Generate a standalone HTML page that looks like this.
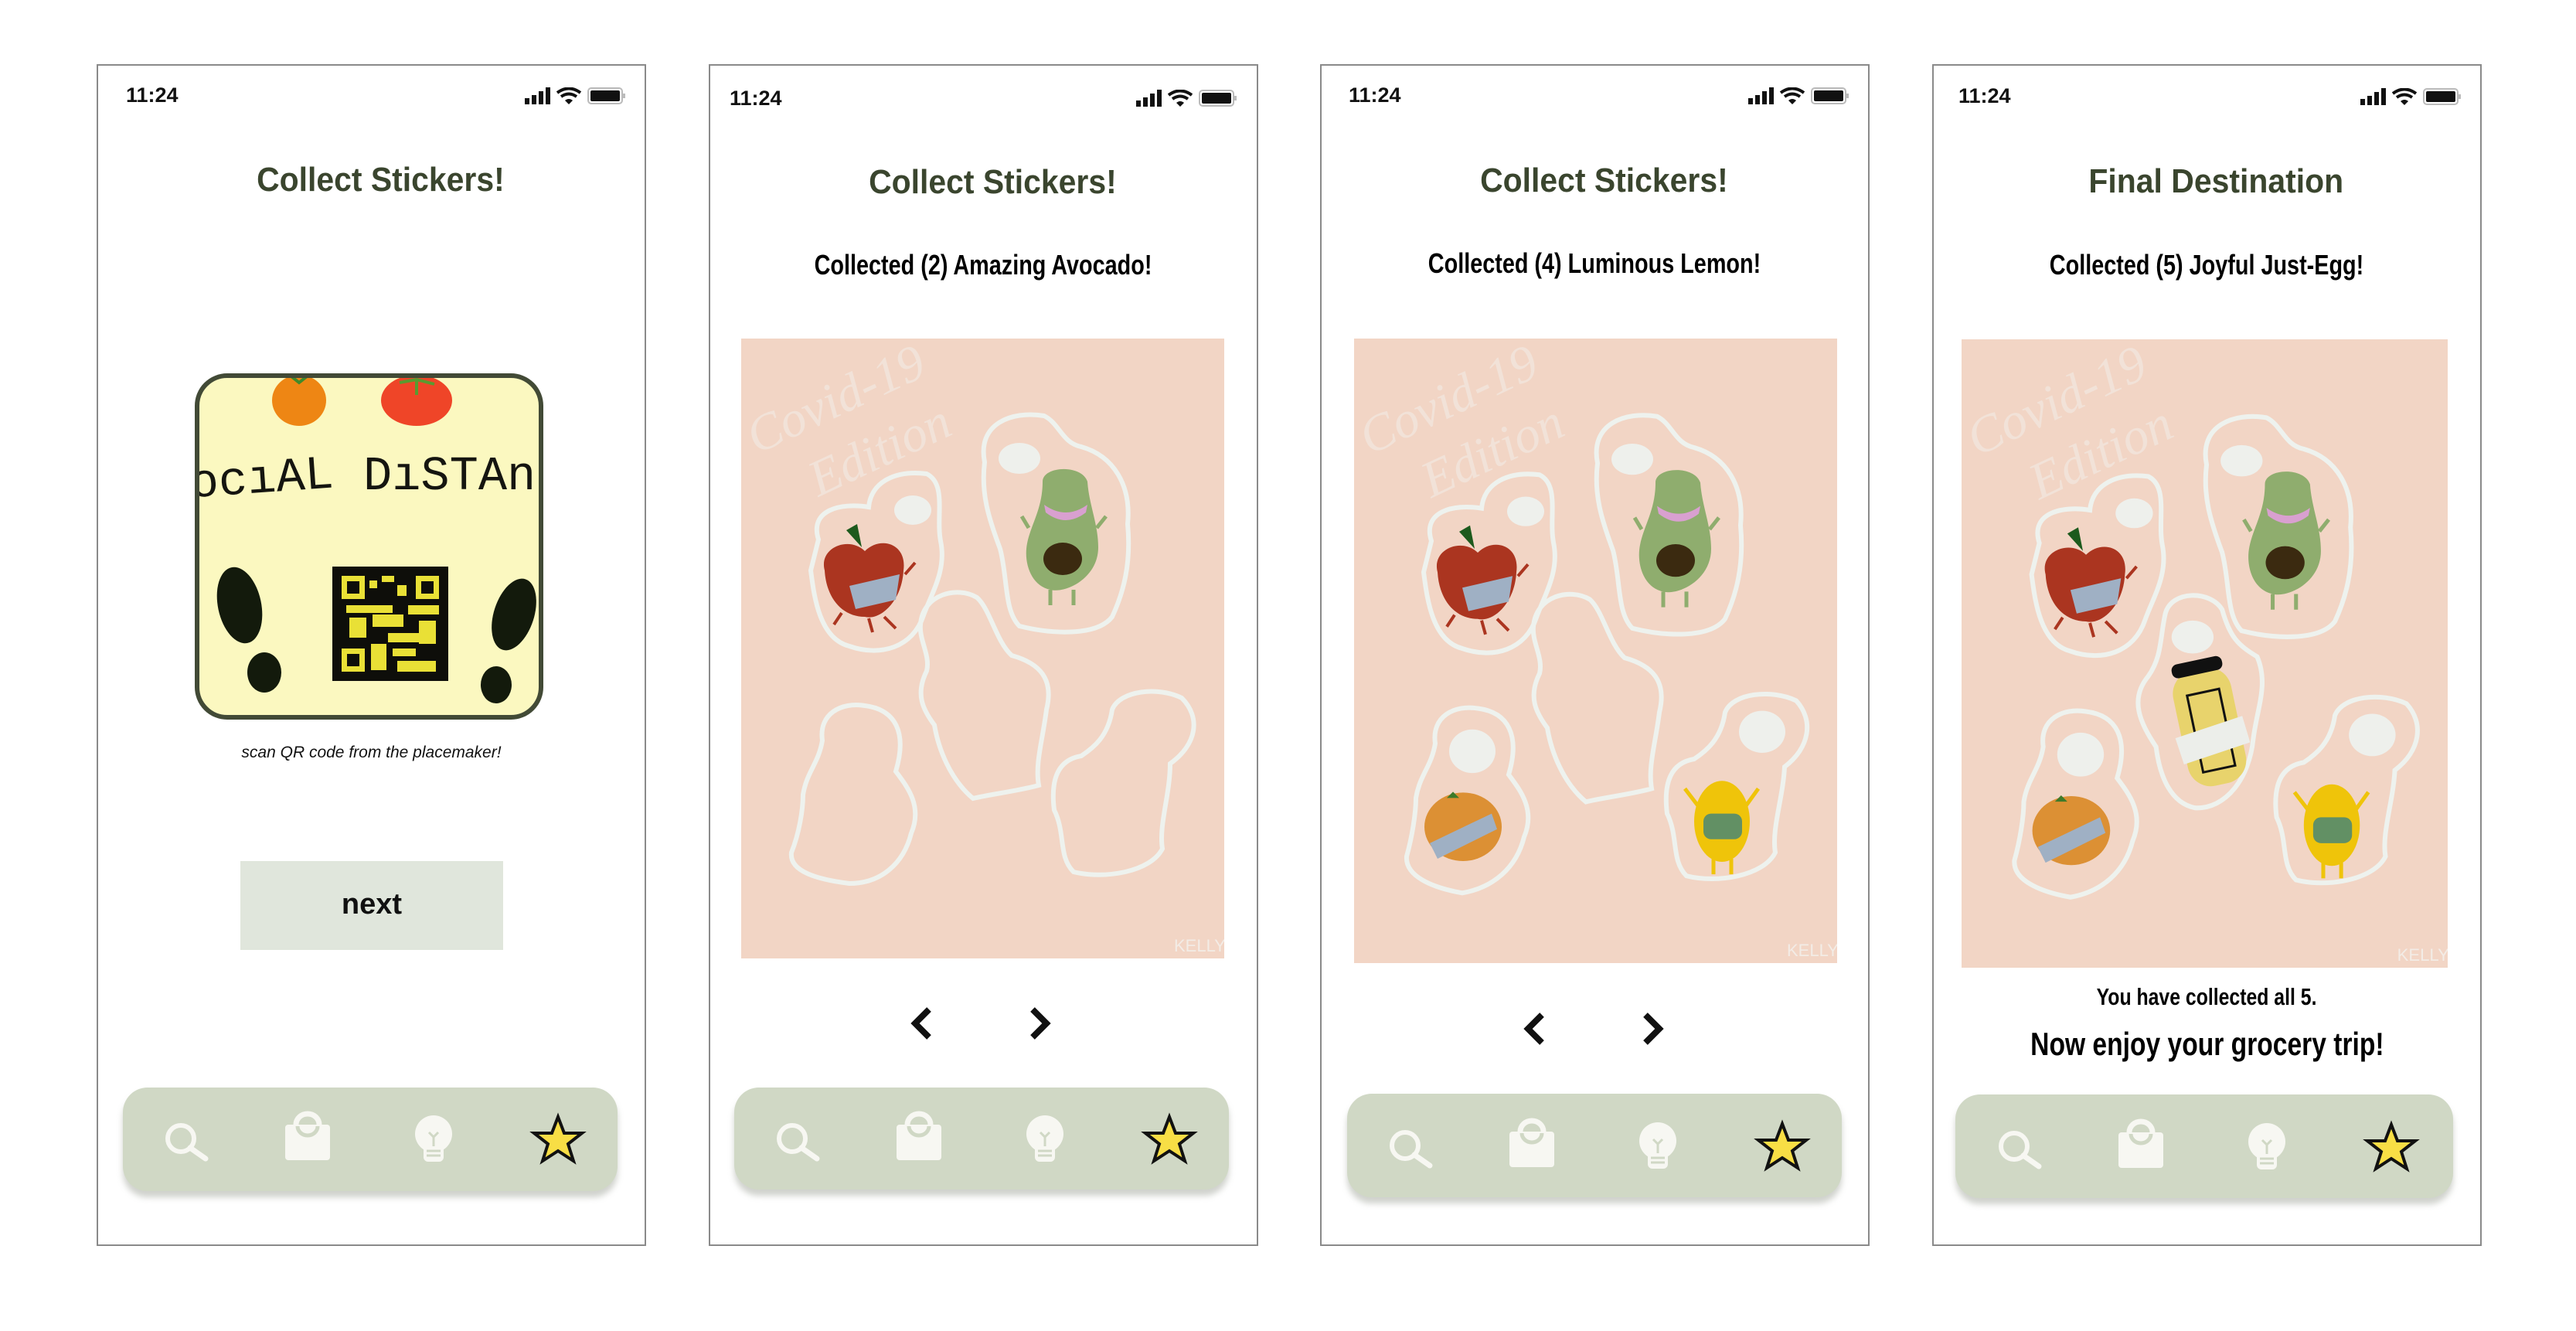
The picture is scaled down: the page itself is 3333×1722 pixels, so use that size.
<!DOCTYPE html>
<html><head><meta charset="utf-8">
<style>
*{margin:0;padding:0;box-sizing:border-box}
html,body{width:3333px;height:1722px;background:#fff;overflow:hidden;position:relative;font-family:"Liberation Sans",sans-serif}
.ph{position:absolute;top:83px;width:711px;height:1529px;border:2px solid #8a8a8a;background:#fff}
.abs{position:absolute}
.time{position:absolute;font-weight:bold;font-size:27px;color:#111}
.ctr{position:absolute;text-align:center;white-space:nowrap}
.ctr span{display:inline-block}
.title{font-weight:bold;font-size:44px;color:#3a452e}
.title span{transform:scaleX(.93)}
.sub{font-weight:bold;font-size:36px;color:#000}
.sub span{transform:scaleX(.8)}
.nav{position:absolute;background:#d0d8c5;border-radius:32px;box-shadow:0 8px 8px rgba(150,155,145,.45)}
.pink{position:absolute;background:#f2d5c5}
</style></head><body>

<svg width="0" height="0" style="position:absolute">
<defs>
<g id="status">
 <rect x="0" y="14" width="6" height="8" fill="#111"/><rect x="9" y="10" width="6" height="12" fill="#111"/><rect x="18" y="5" width="6" height="17" fill="#111"/><rect x="27" y="0" width="6" height="22" fill="#111"/>
 <path d="M42 7 Q57 -4 72 7" stroke="#111" stroke-width="4" fill="none"/><path d="M47 12 Q57 5 67 12" stroke="#111" stroke-width="4" fill="none"/><path d="M52 17 L57 22 L62 17 Q57 13 52 17Z" fill="#111"/>
 <rect x="82" y="1" width="44" height="20" rx="4" fill="none" stroke="#bbb" stroke-width="2"/><rect x="85" y="4" width="38" height="14" rx="2" fill="#111"/><rect x="127" y="8" width="3" height="6" fill="#bbb"/>
</g>
<g id="icons">
 <circle cx="0" cy="0" r="17" fill="none" stroke="#f7f7f2" stroke-width="6"/><path d="M12 12 L32 26" stroke="#f7f7f2" stroke-width="7" stroke-linecap="round"/>
 <g transform="translate(164,0)"><rect x="-29" y="-18" width="58" height="46" rx="4" fill="#f7f7f2"/><path d="M-15 -18 a15 14 0 0 1 30 0 M-13 -14 a13 12 0 0 0 26 0" stroke="#f7f7f2" stroke-width="7" fill="none"/><path d="M-13 -16 a13 12 0 0 0 26 0" stroke="#d0d8c5" stroke-width="5" fill="none"/></g>
 <g transform="translate(327,0)"><circle cx="0" cy="-6" r="24" fill="#f7f7f2"/><rect x="-13" y="8" width="26" height="22" rx="6" fill="#f7f7f2"/><path d="M-6 -8 L0 -2 L6 -8 M0 -2 L0 10 M-9 16 H9 M-9 22 H9" stroke="#d0d8c5" stroke-width="3" fill="none"/></g>
 <polygon transform="translate(488,2)" points="0,-30 8,-9 31,-9 13,5 20,27 0,14 -20,27 -13,5 -31,-9 -8,-9" fill="#f8de45" stroke="#111" stroke-width="4" stroke-linejoin="miter"/>
</g>
<g id="cov">
 <text x="20" y="150" transform="rotate(-25 20 150)" font-family="Liberation Serif,serif" font-style="italic" font-size="66" fill="#f3ece6" opacity=".6">Covid-19</text>
 <text x="100" y="205" transform="rotate(-25 100 205)" font-family="Liberation Serif,serif" font-style="italic" font-size="66" fill="#f3ece6" opacity=".6">Edition</text>
 <text x="560" y="793" font-family="Liberation Sans,sans-serif" font-size="22" fill="#f3ece6">KELLY</text>
</g>
<g id="apple">
 <path d="M100,260 C88,222 128,212 165,218 C168,185 200,170 240,175 C266,188 252,230 258,262 C266,300 246,330 236,358 C222,400 180,412 140,398 C100,388 94,330 90,300 Z" fill="none" stroke="#eef2ee" stroke-width="6"/>
 <ellipse cx="222" cy="222" rx="24" ry="19" fill="#eef0ec"/>
 <path d="M108,300 C100,270 140,255 160,275 C180,255 215,265 210,300 C208,340 180,365 160,360 C130,360 110,335 108,300Z" fill="#ab3520"/>
 <path d="M136,248 L150,240 L156,270Z" fill="#1d5a1d"/>
 <path d="M140,320 L205,305 L200,338 L148,350Z" fill="#9fb0c4"/>
 <path d="M212,305 L225,290 M130,355 L120,370 M165,362 L170,380 M185,360 L200,375" stroke="#ab3520" stroke-width="4"/>
</g>
<g id="avo">
 <path d="M315,160 C305,110 350,93 392,100 C412,110 415,135 440,140 C482,152 505,190 500,240 C505,292 494,330 480,360 C460,386 400,382 360,372 C340,352 345,310 335,272 C320,232 310,200 315,160 Z" fill="none" stroke="#eef2ee" stroke-width="6"/>
 <ellipse cx="360" cy="155" rx="27" ry="20" fill="#eef0ec"/>
 <path d="M390,185 C390,165 440,162 448,185 C450,215 462,240 462,270 C462,310 420,330 400,325 C375,320 365,290 370,265 C375,240 390,220 390,185Z" fill="#8fad6e"/>
 <path d="M392,215 Q420,235 448,215 L446,225 Q420,245 394,225Z" fill="#d9a0d0"/>
 <ellipse cx="416" cy="285" rx="25" ry="21" fill="#3b2a10"/>
 <path d="M372,245 L363,230 M460,245 L472,230 M400,325 V345 M430,325 V345" stroke="#8fad6e" stroke-width="5"/>
</g>
<g id="emptyC"><path d="M232,370 C235,330 280,320 305,335 C322,350 330,392 350,410 C386,420 405,440 395,480 C390,520 380,550 385,578 C360,585 320,590 300,595 C270,570 255,530 250,500 C235,480 225,460 240,430 C245,410 230,390 232,370 Z" fill="none" stroke="#eef2ee" stroke-width="6"/></g>
<g id="emptyL"><path d="M105,520 C100,485 130,470 160,475 C200,480 215,510 200,560 C215,580 235,605 220,640 C210,680 180,705 140,705 C100,700 62,690 65,665 C75,640 80,610 80,590 C85,560 100,550 105,520 Z" fill="none" stroke="#eef2ee" stroke-width="6"/></g>
<g id="emptyR"><path d="M480,480 C490,455 540,450 570,465 C595,490 590,525 555,550 C555,590 540,630 545,660 C530,690 470,700 430,690 C410,670 420,640 405,610 C400,570 410,545 440,540 C455,530 475,515 480,480 Z" fill="none" stroke="#eef2ee" stroke-width="6"/></g>
<g id="orange">
 <path d="M105,520 C100,485 130,470 160,475 C200,480 215,510 200,560 C215,580 235,605 220,640 C210,680 180,705 140,712 C100,705 66,690 68,665 C75,640 80,610 80,590 C85,560 100,550 105,520 Z" fill="none" stroke="#eef2ee" stroke-width="6"/>
 <ellipse cx="153" cy="530" rx="30" ry="28" fill="#eef0ec"/>
 <ellipse cx="141" cy="627" rx="50" ry="44" fill="#dc9034"/>
 <path d="M98,648 L178,610 L185,630 L108,668Z" fill="#9fb0c4"/>
 <path d="M120,590 l8,-8 l8,8z" fill="#3d7a2a"/>
</g>
<g id="lemon">
 <path d="M480,480 C490,455 540,450 572,465 C595,490 590,525 557,550 C555,590 540,630 545,660 C530,690 470,700 430,690 C410,670 420,640 405,610 C400,570 410,545 440,540 C455,530 475,515 480,480 Z" fill="none" stroke="#eef2ee" stroke-width="6"/>
 <ellipse cx="528" cy="505" rx="30" ry="27" fill="#eef0ec"/>
 <ellipse cx="476" cy="620" rx="36" ry="52" fill="#efc40a"/>
 <rect x="452" y="610" width="50" height="33" rx="10" fill="#629064"/>
 <path d="M445,600 L428,578 M507,600 L523,578 M465,668 V688 M488,668 V688" stroke="#efc40a" stroke-width="5"/>
</g>
<g id="egg">
 <path d="M262,350 C270,320 320,320 335,345 C345,380 355,390 380,405 C395,440 380,470 375,510 C370,560 340,600 300,598 C270,592 255,560 250,520 C230,490 215,460 240,430 C258,405 255,380 262,350Z" fill="none" stroke="#eef2ee" stroke-width="6"/>
 <ellipse cx="297" cy="380" rx="27" ry="21" fill="#eef0ec"/>
 <g transform="rotate(-12 317 491)">
  <rect x="280" y="420" width="76" height="150" rx="30" fill="#e8d36c"/>
  <rect x="285" y="408" width="66" height="18" rx="8" fill="#111"/>
  <rect x="298" y="450" width="42" height="100" fill="none" stroke="#111" stroke-width="3"/>
  <path d="M272,500 L362,490 L365,525 L276,535Z" fill="#eceeea"/>
 </g>
</g>
</defs></svg>

<!-- Phone 1 -->
<div class="ph" style="left:125px"></div>
<div class="time" style="left:163px;top:108px">11:24</div>
<svg class="abs" style="left:679px;top:113px" width="132" height="24"><use href="#status"/></svg>
<div class="ctr title" style="left:137px;width:711px;top:208px"><span>Collect Stickers!</span></div>
<div class="abs" style="left:252px;top:483px;width:451px;height:448px;border:6px solid #424a36;border-radius:42px;background:#fbf8c0;overflow:hidden">
 <svg width="451" height="448" viewBox="0 0 451 448" style="position:absolute;left:-6px;top:-6px">
  <ellipse cx="135" cy="35" rx="35" ry="33" fill="#ee8614"/>
  <path d="M125,4 l10,8 l10,-8" stroke="#3f8a2a" stroke-width="4" fill="none"/>
  <ellipse cx="287" cy="35" rx="46" ry="33" fill="#ef4528"/>
  <path d="M265,12 L287,8 L310,14 M287,8 V28" stroke="#5a9a30" stroke-width="4" fill="none"/>
  <text x="-5" y="160" font-family="Liberation Mono,monospace" font-size="62" fill="#151510" transform="rotate(-4 0 160)">ocıAL</text>
  <text x="218" y="150" font-family="Liberation Mono,monospace" font-size="62" fill="#151510">DıSTAnc</text>
  <rect x="178" y="250" width="150" height="148" fill="#0e0e0a"/>
  <g fill="#e9e036">
   <rect x="190" y="262" width="30" height="30"/><rect x="286" y="262" width="30" height="30"/><rect x="190" y="356" width="30" height="30"/>
   <rect x="226" y="268" width="10" height="10"/><rect x="242" y="262" width="16" height="8"/><rect x="262" y="274" width="12" height="14"/>
   <rect x="196" y="300" width="60" height="10"/><rect x="230" y="312" width="40" height="16"/><rect x="276" y="300" width="40" height="12"/>
   <rect x="200" y="316" width="22" height="26"/><rect x="250" y="336" width="48" height="12"/><rect x="290" y="320" width="22" height="30"/>
   <rect x="228" y="350" width="20" height="34"/><rect x="256" y="356" width="30" height="10"/><rect x="262" y="372" width="50" height="14"/>
  </g>
  <g fill="#0e0e0a"><rect x="197" y="269" width="16" height="16"/><rect x="293" y="269" width="16" height="16"/><rect x="197" y="363" width="16" height="16"/></g>
  <g fill="#131a0c">
   <ellipse cx="58" cy="300" rx="28" ry="50" transform="rotate(-12 58 300)"/><ellipse cx="90" cy="387" rx="22" ry="26"/>
   <ellipse cx="413" cy="312" rx="26" ry="48" transform="rotate(18 413 312)"/><ellipse cx="390" cy="403" rx="20" ry="24"/>
  </g>
 </svg>
</div>
<div class="ctr" style="left:125px;width:711px;top:962px;font-size:21px;font-style:italic;color:#111">scan QR code from the placemaker!</div>
<div class="abs" style="left:311px;top:1114px;width:340px;height:115px;background:#e0e6dc;text-align:center;line-height:113px;font-weight:bold;font-size:38px;color:#111">next</div>
<div class="nav" style="left:159px;top:1407px;width:640px;height:134px"></div>
<svg class="abs" style="left:159px;top:1407px" width="640" height="134"><use href="#icons" transform="translate(75,66)"/></svg>

<!-- Phone 2 -->
<div class="ph" style="left:917px"></div>
<div class="time" style="left:944px;top:112px">11:24</div>
<svg class="abs" style="left:1470px;top:116px" width="132" height="24"><use href="#status"/></svg>
<div class="ctr title" style="left:929px;width:711px;top:211px"><span>Collect Stickers!</span></div>
<div class="ctr sub" style="left:917px;width:711px;top:322px"><span>Collected (2) Amazing Avocado!</span></div>
<div class="pink" style="left:959px;top:438px;width:625px;height:802px"><svg width="625" height="802" viewBox="0 0 625 802"><use href="#cov"/><use href="#apple"/><use href="#avo"/><use href="#emptyC"/><use href="#emptyL"/><use href="#emptyR"/></svg></div>
<svg class="abs" style="left:1170px;top:1300px" width="200" height="50"><path d="M32 6 L14 24 L32 42" stroke="#111" stroke-width="8" fill="none"/><path d="M166 6 L184 24 L166 42" stroke="#111" stroke-width="8" fill="none"/></svg>
<div class="nav" style="left:950px;top:1407px;width:640px;height:132px"></div>
<svg class="abs" style="left:950px;top:1407px" width="640" height="132"><use href="#icons" transform="translate(75,66)"/></svg>

<!-- Phone 3 -->
<div class="ph" style="left:1708px"></div>
<div class="time" style="left:1745px;top:108px">11:24</div>
<svg class="abs" style="left:2262px;top:113px" width="132" height="24"><use href="#status"/></svg>
<div class="ctr title" style="left:1720px;width:711px;top:209px"><span>Collect Stickers!</span></div>
<div class="ctr sub" style="left:1708px;width:711px;top:320px"><span>Collected (4) Luminous Lemon!</span></div>
<div class="pink" style="left:1752px;top:438px;width:625px;height:808px"><svg width="625" height="808" viewBox="0 0 625 802" preserveAspectRatio="none"><use href="#cov"/><use href="#apple"/><use href="#avo"/><use href="#emptyC"/><use href="#orange"/><use href="#lemon"/></svg></div>
<svg class="abs" style="left:1963px;top:1307px" width="200" height="50"><path d="M32 6 L14 24 L32 42" stroke="#111" stroke-width="8" fill="none"/><path d="M166 6 L184 24 L166 42" stroke="#111" stroke-width="8" fill="none"/></svg>
<div class="nav" style="left:1743px;top:1415px;width:640px;height:134px"></div>
<svg class="abs" style="left:1743px;top:1415px" width="640" height="134"><use href="#icons" transform="translate(75,67)"/></svg>

<!-- Phone 4 -->
<div class="ph" style="left:2500px"></div>
<div class="time" style="left:2534px;top:109px">11:24</div>
<svg class="abs" style="left:3054px;top:114px" width="132" height="24"><use href="#status"/></svg>
<div class="ctr title" style="left:2512px;width:711px;top:210px"><span>Final Destination</span></div>
<div class="ctr sub" style="left:2500px;width:711px;top:322px"><span>Collected (5) Joyful Just-Egg!</span></div>
<div class="pink" style="left:2538px;top:439px;width:629px;height:813px"><svg width="629" height="813" viewBox="0 0 625 802" preserveAspectRatio="none"><use href="#cov"/><use href="#apple"/><use href="#avo"/><use href="#egg"/><use href="#orange"/><use href="#lemon"/></svg></div>
<div class="ctr" style="left:2500px;width:711px;top:1272px;font-weight:bold;font-size:31px;color:#000"><span style="transform:scaleX(.8)">You have collected all 5.</span></div>
<div class="ctr" style="left:2500px;width:711px;top:1327px;font-weight:bold;font-size:42px;color:#000"><span style="transform:scaleX(.8)">Now enjoy your grocery trip!</span></div>
<div class="nav" style="left:2530px;top:1416px;width:644px;height:134px"></div>
<svg class="abs" style="left:2530px;top:1416px" width="644" height="134"><use href="#icons" transform="translate(76,67)"/></svg>

</body></html>
